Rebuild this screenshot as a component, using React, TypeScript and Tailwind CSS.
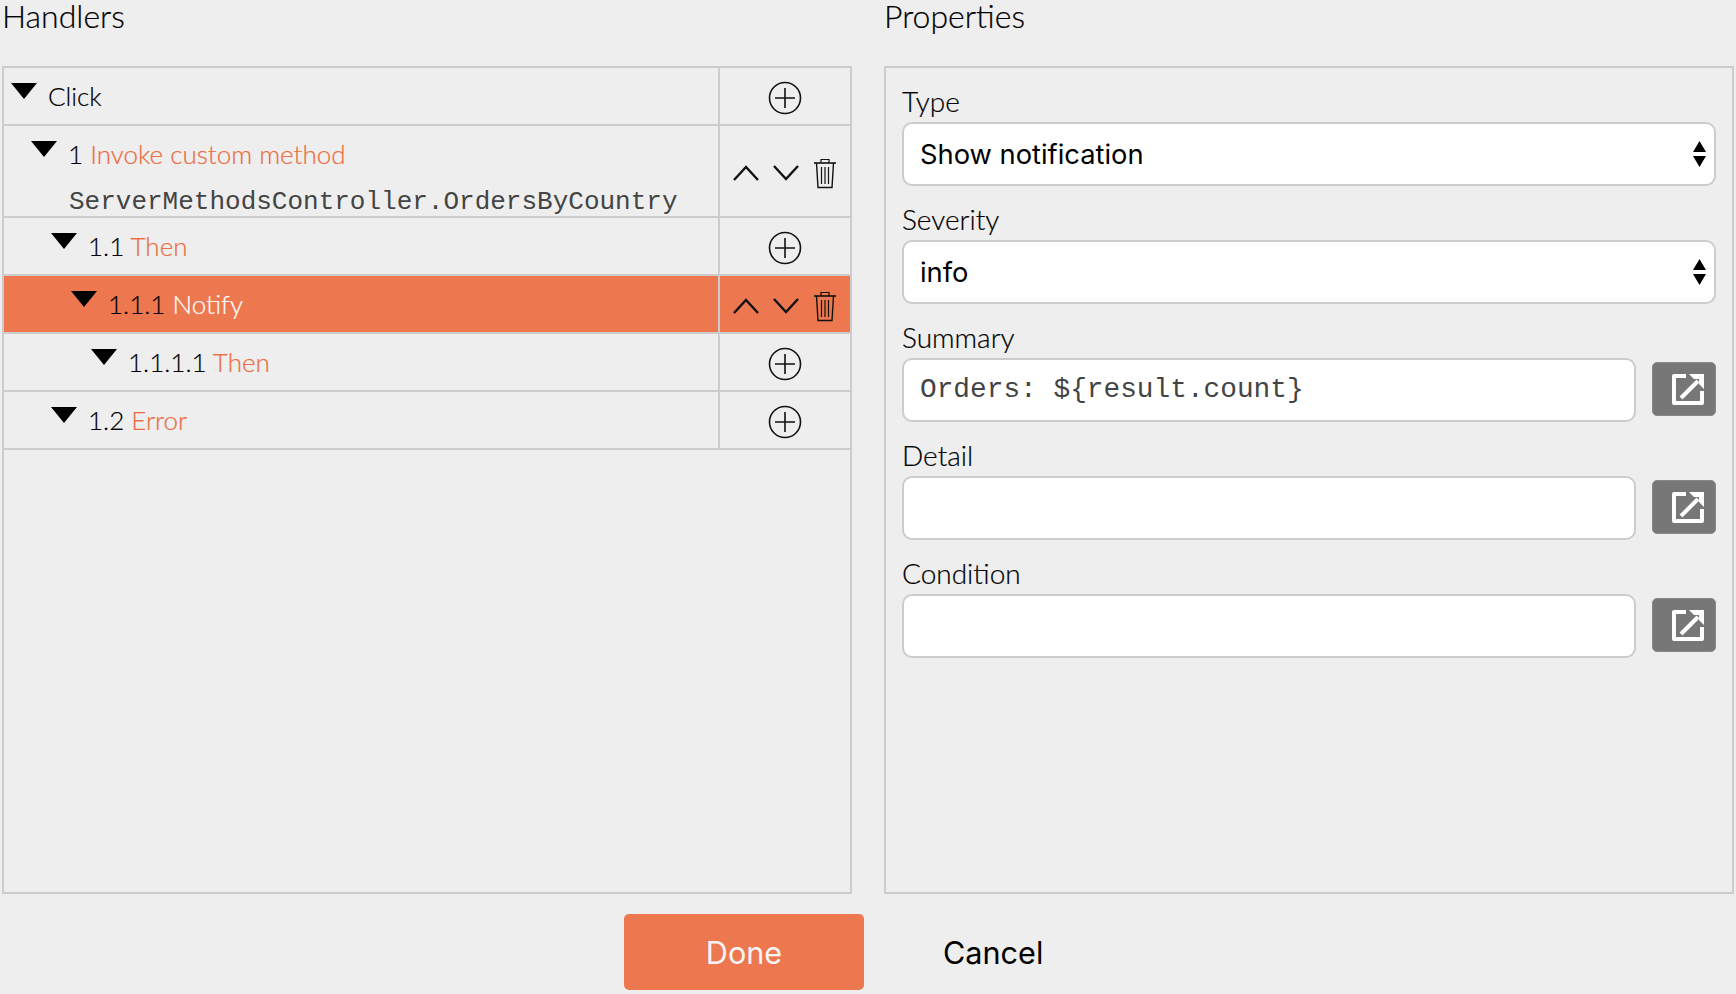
import * as React from "react"

const Caret = () => (
  <svg width="26" height="16" viewBox="0 0 26 16" className="shrink-0">
    <path d="M0 0H26L13 16Z" fill="#000" />
  </svg>
)

const PlusIcon = () => (
  <svg width="34" height="34" viewBox="0 0 34 34" fill="none" stroke="#111" strokeWidth="1.6">
    <circle cx="17" cy="17" r="15.5" />
    <path d="M17 7V27M7 17H27" />
  </svg>
)

const Chevron = ({ up }: { up?: boolean }) => (
  <svg width="26" height="16" viewBox="0 0 26 16" fill="none" stroke="#111" strokeWidth="2.4">
    <path d={up ? "M1 15L13 2L25 15" : "M1 1L13 14L25 1"} />
  </svg>
)

const TrashIcon = () => (
  <svg width="24" height="32" viewBox="0 0 24 32" fill="none" stroke="#111" strokeWidth="1.2">
    <path d="M1 6H23" strokeWidth="1.6" />
    <path d="M8 6V2.5H16V6" />
    <path d="M3.5 6L5 30.5H19L20.5 6" strokeWidth="1.4" />
    <path d="M8.5 10V27M12 10V27M15.5 10V27" />
  </svg>
)

const ExternalIcon = () => (
  <svg width="32" height="31" viewBox="0 0 32 31" fill="none" className="ml-[8px]">
    <path d="M14 2H2V29H30V17" stroke="#fff" strokeWidth="4" strokeLinejoin="round" />
    <path d="M9 24L26 7" stroke="#fff" strokeWidth="4" />
    <path d="M17 0H32V15L27 10V5H22Z" fill="#fff" />
  </svg>
)

const SelectArrows = () => (
  <svg width="13" height="26" viewBox="0 0 13 26" className="shrink-0">
    <path d="M6.5 0L13 11H0Z M0 15H13L6.5 26Z" fill="#000" />
  </svg>
)

interface Row {
  level: number
  number?: string
  name: string
  code?: string
  moves?: boolean
  selected?: boolean
}

const rows: Row[] = [
  { level: 0, name: "Click" },
  { level: 1, number: "1", name: "Invoke custom method", code: "ServerMethodsController.OrdersByCountry", moves: true },
  { level: 2, number: "1.1", name: "Then" },
  { level: 3, number: "1.1.1", name: "Notify", moves: true, selected: true },
  { level: 4, number: "1.1.1.1", name: "Then" },
  { level: 2, number: "1.2", name: "Error" },
]

const indents = ["pl-[7px]", "pl-[27px]", "pl-[47px]", "pl-[67px]", "pl-[87px]"]

const HandlerRow = ({ row }: { row: Row }) => (
  <div className={`flex border-b-2 border-[#ccc] box-border ${row.code ? "h-[92px]" : "h-[58px]"} ${row.selected ? "bg-[#ed774f]" : ""}`}>
    <div className={`flex-1 min-w-0 border-r-2 border-[#ccc] ${indents[row.level]}`}>
      <div className="flex items-start h-[56px]">
        <div className="pt-[15px]">
          <Caret />
        </div>
        <div className="ml-[11px] leading-[56px] text-[26px] font-light text-black whitespace-nowrap [-webkit-text-stroke:0.2px]">
          {row.number && <span>{row.number} </span>}
          <span className={row.selected ? "text-white" : row.number ? "text-[#ec6c40]" : ""}>{row.name}</span>
        </div>
      </div>
      {row.code && (
        <div className="ml-[38px] mt-[5px] font-['Liberation_Mono',monospace] text-[26px] leading-[30px] text-[#444] whitespace-nowrap">
          {row.code}
        </div>
      )}
    </div>
    <div className="w-[130px] shrink-0 flex items-center justify-center gap-[14px] pt-[3px] pr-[1px]">
      {row.moves ? (
        <>
          <Chevron up />
          <Chevron />
          <TrashIcon />
        </>
      ) : (
        <PlusIcon />
      )}
    </div>
  </div>
)

const Label = ({ children }: { children: React.ReactNode }) => (
  <div className="h-[40px] text-[28px] font-light leading-[38px] text-black [-webkit-text-stroke:0.2px]">{children}</div>
)

const SelectField = ({ label, value }: { label: string; value: string }) => (
  <div className="h-[118px] pt-[14px] box-border">
    <Label>{label}</Label>
    <div className="h-[64px] rounded-[10px] border-2 border-[#ccc] bg-white pl-[16px] pr-[8px] flex items-center justify-between font-['Inter',sans-serif] text-[27.3px] text-black">
      <span className="pt-[3px]">{value}</span>
      <SelectArrows />
    </div>
  </div>
)

const TextField = ({ label, value }: { label: string; value?: string }) => (
  <div className="h-[118px] pt-[14px] box-border">
    <Label>{label}</Label>
    <div className="flex items-center gap-[16px]">
      <input
        readOnly
        value={value ?? ""}
        className="flex-1 min-w-0 h-[64px] rounded-[10px] border-2 border-[#ccc] bg-white px-[16px] pb-[2px] font-['Liberation_Mono',monospace] text-[27.8px] text-[#444] outline-none"
      />
      <button className="w-[64px] h-[54px] mb-[2px] rounded-[5px] bg-[#777] border border-[#888] flex items-center justify-center">
        <ExternalIcon />
      </button>
    </div>
  </div>
)

export default function App() {
  return (
    <div className="w-[1736px] h-[994px] overflow-hidden bg-[#eee] font-['Lato',sans-serif]">
      <div className="flex h-[894px] pl-[2px] pr-[2px] gap-[32px]">
        <div className="w-[850px] shrink-0 flex flex-col">
          <h2 className="h-[66px] text-[32px] font-light leading-[32px] text-black [-webkit-text-stroke:0.2px]">Handlers</h2>
          <div className="flex-1 border-2 border-[#ccc]">
            {rows.map((row, i) => (
              <HandlerRow key={i} row={row} />
            ))}
          </div>
        </div>
        <div className="flex-1 flex flex-col">
          <h2 className="h-[66px] text-[32px] font-light leading-[32px] text-black [-webkit-text-stroke:0.2px]">Properties</h2>
          <div className="flex-1 border-2 border-[#ccc] px-[16px]">
            <SelectField label="Type" value="Show notification" />
            <SelectField label="Severity" value="info" />
            <TextField label="Summary" value={"Orders: ${result.count}"} />
            <TextField label="Detail" />
            <TextField label="Condition" />
          </div>
        </div>
      </div>
      <div className="flex pt-[20px] pl-[624px] font-['Inter',sans-serif] text-[30.6px]">
        <button className="w-[240px] h-[76px] pt-[2px] rounded-[5px] bg-[#ed774f] text-[#f5f5f5]">Done</button>
        <button className="ml-[79px] h-[76px] pt-[2px] text-black">Cancel</button>
      </div>
    </div>
  )
}
